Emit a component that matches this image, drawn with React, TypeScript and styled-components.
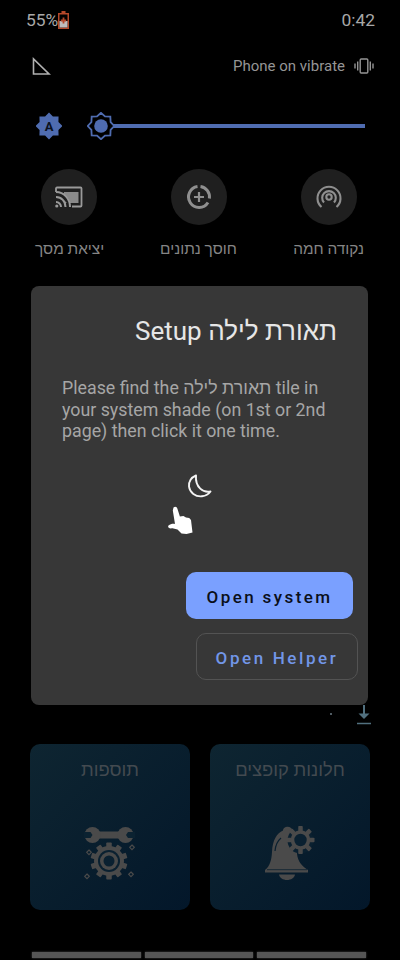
import React from "react";
import styled, { createGlobalStyle } from "styled-components";

const Global = createGlobalStyle`
  html, body { margin: 0; padding: 0; background: #000; }
  * { box-sizing: border-box; }
`;
const FONT = `Roboto, "Noto Sans", "Liberation Sans", "DejaVu Sans", sans-serif`;

const Screen = styled.div`
  width: 400px; height: 960px; overflow: hidden; background: #000;
  font-family: ${FONT}; display: flex; flex-direction: column;
`;
const StatusBar = styled.div`
  height: 40px; padding: 0 25px 0 26px; display: flex; align-items: center; justify-content: space-between;
  color: #a8a8a8; font-size: 17.4px;
`;
const StatusLeft = styled.div`display: flex; align-items: center; gap: 0;`;
const HeaderRow = styled.div`
  height: 52px; padding: 0 26px 0 31px; display: flex; align-items: center; justify-content: space-between;
`;
const VibrateGroup = styled.div`display: flex; align-items: center; gap: 9px; color: #959595; font-size: 15px;`;
const SliderRow = styled.div`
  height: 68px; padding: 0 35px 0 36px; display: flex; align-items: center;
`;
const SliderThumb = styled.div`margin-left: 25px; display: flex; z-index: 1;`;
const SliderTrack = styled.div`flex: 1; height: 3.5px; background: #4f6cb0; margin-left: -2px;`;
const TileRow = styled.div`
  padding: 9px 36px 0 35px; display: grid; grid-template-columns: 67px 1fr 65px; height: 126px;
`;
const Tile = styled.div<{ $align: string; $pad?: string }>`
  display: flex; flex-direction: column; align-items: ${p => p.$align}; gap: 14px;
  padding: ${p => p.$pad ?? "0"};
`;
const Circle = styled.div<{ $inset?: string }>`
  width: 56px; height: 56px; border-radius: 50%; background: #1f1f1f; color: #8f8f8f;
  display: flex; align-items: center; justify-content: center;
  margin: ${p => p.$inset ?? "0"};
`;
const TileLabel = styled.div`
  font-size: 15.4px; line-height: 20px; color: #858585; white-space: nowrap; direction: rtl;
`;
const Dialog = styled.div`
  margin: 0 32px 0 31px; height: 419px; flex: none; background: #373737; border-radius: 8px;
  display: flex; flex-direction: column; padding: 28px 10px 0 31px; z-index: 2;
`;
const DialogTitle = styled.h1`
  margin: 0; padding-right: 21px; font-size: 26px; line-height: 34px; font-weight: 400; color: #e6e6e6; direction: rtl; text-align: right;
`;
const DialogBody = styled.p`
  margin: 29px 0 0; width: 285px; font-size: 17.8px; line-height: 21.5px; color: #a6a6a6;
`;
const Illustration = styled.div`
  position: relative; height: 88px; margin: 20px 0 0 70px; width: 60px;
`;
const Moon = styled.svg`position: absolute; left: 55px; top: 12px;`;
const Hand = styled.svg`position: absolute; left: 35px; top: 43px;`;
const Actions = styled.div`display: flex; flex-direction: column; align-items: flex-end; margin-top: 22px; gap: 14px;`;
const BaseButton = styled.button`
  height: 47px; border-radius: 10px; font-family: ${FONT}; font-size: 17px; font-weight: 500; padding: 3px 0 0;
`;
const PrimaryButton = styled(BaseButton)`
  width: 167px; margin-right: 5px; background: #7aa0ff; color: #0a0f1a; border: none; letter-spacing: 2.4px;
`;
const SecondaryButton = styled(BaseButton)`
  width: 162px; background: transparent; color: #7296e8; border: 1px solid #535353; letter-spacing: 2.6px;
`;
const DownloadRow = styled.div`
  position: relative; height: 39px; padding: 0 28px 0 0; display: flex; justify-content: flex-end; align-items: flex-start;
`;
const Speck = styled.span`
  position: absolute; left: 330px; top: 8px; width: 2px; height: 2px; background: #6b7a84; border-radius: 50%;
`;
const CardGrid = styled.div`
  display: grid; grid-template-columns: 160px 160px; gap: 20px; padding: 0 30px;
`;
const Card = styled.div`
  height: 166px; border-radius: 10px; background: linear-gradient(135deg, #0e2531, #03172a);
  display: flex; flex-direction: column; align-items: center; padding-top: 12px;
`;
const CardTitle = styled.div`
  font-size: 18.4px; line-height: 28px; color: #434a50; direction: rtl; white-space: nowrap;
`;
const CardIcon = styled.svg`margin-top: 42px; color: #4a4a4a;`;
const BottomBars = styled.div`
  display: grid; grid-template-columns: repeat(3, 1fr); gap: 4px; padding: 0 34px 0 32px; margin-top: 42px;
`;
const Bar = styled.div`height: 6px; background: #565656; box-shadow: 0 0 2px #565656;`;

const Battery = () => (
  <svg width="11" height="18" viewBox="0 0 11 18">
    <path d="M3.500 0h4v2h3.500v16H0V2h3.500z" fill="#b4482a" />
    <rect x="1.500" y="3.500" width="8" height="13" fill="#000" />
    <rect x="1.500" y="10" width="8" height="6.500" fill="#bdbdbd" />
    <path d="M5.500 6.500v6M2.800 9.500h5.400" stroke="#b4482a" strokeWidth="1.800" />
  </svg>
);
const Triangle = () => (
  <svg width="20" height="20" viewBox="0 0 20 20" fill="none">
    <path d="M2.500 3v15h15.500z" stroke="#b0b0b0" strokeWidth="1.600" />
  </svg>
);
const Vibrate = () => (
  <svg width="20" height="16" viewBox="0 0 20 16" fill="none" stroke="#959595" strokeWidth="1.400">
    <rect x="6.200" y="1" width="7.600" height="14" rx="1" />
    <path d="M3.700 3.500v9M1 5.500v5M16.300 3.500v9M19 5.500v5" />
  </svg>
);
const starPath = (cx: number, cy: number, r1: number, r2: number) => {
  const pts: string[] = [];
  for (let i = 0; i < 16; i++) {
    const r = i % 2 === 0 ? r1 : r2;
    const a = (Math.PI * i) / 8 - Math.PI / 2;
    pts.push(`${(cx + r * Math.cos(a)).toFixed(2)},${(cy + r * Math.sin(a)).toFixed(2)}`);
  }
  return pts.join(" ");
};
const AutoBrightness = () => (
  <svg width="26" height="28" viewBox="0 0 26 28">
    <polygon points={starPath(13, 14, 13.500, 10.200)} fill="#4f6cb0" />
    <text x="13" y="19" textAnchor="middle" fontSize="13" fontWeight="700" fontFamily="Roboto, sans-serif" fill="#0b1220">A</text>
  </svg>
);
const SunThumb = () => (
  <svg width="28" height="28" viewBox="0 0 28 28">
    <polygon points={starPath(14, 14, 13.200, 10.400)} fill="#000" stroke="#4f6cb0" strokeWidth="1.800" />
    <circle cx="14" cy="14" r="6.800" fill="#4f6cb0" />
  </svg>
);
const CastIcon = () => (
  <svg width="28" height="22" viewBox="0 0 28 22" fill="none" stroke="#9a9a9a" strokeWidth="1.800">
    <rect x="9" y="6" width="14.500" height="11" fill="#8a8a8a" stroke="none" />
    <path d="M1 6V2.500a1 1 0 0 1 1-1h23.500a1 1 0 0 1 1 1v17a1 1 0 0 1-1 1H17" />
    <path d="M1 5.800c8.500 0 14.500 6.500 14.500 15" fill="#1f1f1f" stroke="none" />
    <path d="M1 6c8 0 14 6.500 14 15M1 11c5.500 0 9.500 4.300 9.500 10M1 16c2.800 0 5 2.200 5 5" strokeWidth="2" />
    <circle cx="1.800" cy="20" r="1.600" fill="#9a9a9a" stroke="none" />
  </svg>
);
const DataSaver = () => (
  <svg width="26" height="26" viewBox="0 0 26 26" fill="none" stroke="currentColor">
    <path d="M11.500 2.600A10.500 10.500 0 1 0 22 18.500" strokeWidth="3" />
    <path d="M14.500 2.600A10.500 10.500 0 0 1 23.400 14.500" strokeWidth="3" />
    <path d="M13 8v10M8 13h10" strokeWidth="2.200" />
  </svg>
);
const Hotspot = () => (
  <svg width="26" height="26" viewBox="0 0 26 26" fill="none" stroke="currentColor" strokeWidth="2.100">
    <path d="M5.500 23A11.500 11.500 0 1 1 20.500 23" />
    <path d="M8 18.500A6.800 6.800 0 1 1 18 18.500" />
    <circle cx="13" cy="13" r="2.700" />
  </svg>
);
const MoonIcon = () => (
  <Moon width="26" height="26" viewBox="0 0 26 26" fill="none">
    <path d="M9 1.500C4 3.500 1.500 8 2 12.500c.8 6 6.500 10.500 13 9.800 3.500-.4 6.500-2 8.500-4.800-7 1.600-15.500-4-14.500-16z" stroke="#f4f4f4" strokeWidth="1.900" strokeLinejoin="round" />
  </Moon>
);
const HandIcon = () => (
  <Hand width="30" height="34" viewBox="0 0 30 34">
    <path d="M6.500 2.500c1.800-1.400 3.500-.5 4 1.500l2.400 7.500 3.500-.4 2.600 1.500 3.200.3 1.800 2 1.500 12.600-6 1.500-5-.4-4-4-5-1.300C1.500 24 .5 22 1.500 20.500c2-1.800 5-2 6.500-1.500L5.800 5.500z" fill="#fff" />
  </Hand>
);
const Download = () => (
  <svg width="16" height="20" viewBox="0 0 16 20" fill="none" stroke="#51707f" strokeWidth="2">
    <path d="M8 0v12" />
    <path d="M2.500 8.500h11L8 14z" fill="#51707f" stroke="none" />
    <path d="M1 18.500h14" strokeWidth="1.500" />
  </svg>
);
const gearTeeth = (cx: number, cy: number, r1: number, w: number, n: number) =>
  Array.from({ length: n }, (_, i) => {
    const a = (360 / n) * i;
    return <rect key={i} x={cx - w / 2} y={cy - r1} width={w} height={r1 / 2} rx="0.800" transform={`rotate(${a} ${cx} ${cy})`} fill="currentColor" />;
  });
const BellIcon = () => (
  <CardIcon width="52" height="54" viewBox="0 0 52 54" fill="currentColor">
    <path d="M1 44C6 40 7.500 34 8 26 8.500 14 13 7 19 4.500 19 1.500 24-.5 27 2L31 6 34 18 33 28C34 36 38 40 44 44V46.500H1z" />
    <path d="M15 48.500h16c-.5 3.300-4 5.500-8 5.500s-7.500-2.200-8-5.500z" />
    <path d="M11 25c.5-6 2.500-10 6-13" fill="none" stroke="#0a2030" strokeWidth="1.200" />
    <path d="M3 43.700h40" stroke="#0a2030" strokeWidth="0.800" />
    <circle cx="36.500" cy="14.500" r="13" fill="#0a2030" />
    {gearTeeth(36.500, 14, 14, 4.500, 8)}
    <circle cx="36.500" cy="14" r="8" fill="none" stroke="currentColor" strokeWidth="3.600" />
  </CardIcon>
);
const ToolsIcon = () => (
  <CardIcon width="52" height="54" viewBox="0 0 52 54" fill="currentColor">
    <rect x="11" y="5.500" width="28" height="7" />
    <circle cx="8.500" cy="9" r="8" />
    <circle cx="41.500" cy="9" r="8" />
    <path d="M-1 6h7.500l2 3-2 3H-1zM51 6h-7l-2 3 2 3h7z" fill="#0b2231" />
    <g>
      {gearTeeth(25, 35, 18.500, 5.500, 10)}
      <circle cx="25" cy="35" r="15" />
      <circle cx="25" cy="35" r="11" fill="#0a2030" />
      <circle cx="25" cy="35" r="9" />
      <circle cx="25" cy="35" r="5.500" fill="#0a2030" />
    </g>
    <path d="M5 24l2.300 2.300L5 28.600 2.700 26.300zM48 19l2.300 2.300L48 23.600 45.700 21.300zM3 48l2.300 2.300L3 52.600.7 50.300zM47 46l2.300 2.300L47 50.600 44.700 48.300z" fill="none" stroke="currentColor" strokeWidth="1.200" />
  </CardIcon>
);

export default function App() {
  return (
    <Screen>
      <Global />
      <StatusBar>
        <StatusLeft>55%<Battery /></StatusLeft>
        <span>0:42</span>
      </StatusBar>
      <HeaderRow>
        <Triangle />
        <VibrateGroup>Phone on vibrate<Vibrate /></VibrateGroup>
      </HeaderRow>
      <SliderRow>
        <AutoBrightness />
        <SliderThumb><SunThumb /></SliderThumb>
        <SliderTrack />
      </SliderRow>
      <TileRow>
        <Tile $align="flex-start">
          <Circle $inset="0 0 0 6px"><CastIcon /></Circle>
          <TileLabel>יציאת מסך</TileLabel>
        </Tile>
        <Tile $align="center" $pad="0 4px 0 0">
          <Circle><DataSaver /></Circle>
          <TileLabel>חוסך נתונים</TileLabel>
        </Tile>
        <Tile $align="flex-end">
          <Circle $inset="0 7px 0 0"><Hotspot /></Circle>
          <TileLabel>נקודה חמה</TileLabel>
        </Tile>
      </TileRow>
      <Dialog>
        <DialogTitle>תאורת לילה Setup</DialogTitle>
        <DialogBody>Please find the תאורת לילה tile in your system shade (on 1st or 2nd page) then click it one time.</DialogBody>
        <Illustration>
          <MoonIcon />
          <HandIcon />
        </Illustration>
        <Actions>
          <PrimaryButton>Open system</PrimaryButton>
          <SecondaryButton>Open Helper</SecondaryButton>
        </Actions>
      </Dialog>
      <DownloadRow><Speck /><Download /></DownloadRow>
      <CardGrid>
        <Card>
          <CardTitle>תוספות</CardTitle>
          <ToolsIcon />
        </Card>
        <Card>
          <CardTitle>חלונות קופצים</CardTitle>
          <BellIcon />
        </Card>
      </CardGrid>
      <BottomBars><Bar /><Bar /><Bar /></BottomBars>
    </Screen>
  );
}
